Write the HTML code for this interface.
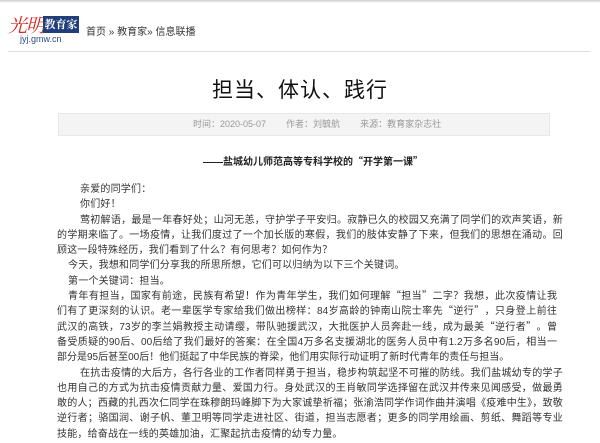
<!DOCTYPE html>
<html><head><meta charset="utf-8"><style>
*{margin:0;padding:0;box-sizing:border-box}
body{width:600px;height:443px;overflow:hidden;background:#fff;font-family:"Liberation Sans","Noto Sans CJK SC",sans-serif;color:#333;position:relative}
.top{position:absolute;left:0;top:0;width:600px;height:3px;background:linear-gradient(#ccc,#fff)}
.logo1{position:absolute;left:8px;top:14px;font-family:"Noto Serif CJK SC",serif;font-style:italic;color:#d9261c;font-size:19px;font-weight:normal;letter-spacing:-1px;line-height:22px}
.logo2{position:absolute;left:43px;top:16px;width:36px;height:17px;background:#1f3e7a;color:#fff;font-family:"Noto Serif CJK SC",serif;font-size:11px;font-weight:bold;line-height:17px;text-align:center}
.dom{position:absolute;left:20px;top:34px;font-size:9px;color:#2a4a8a}
.bc{position:absolute;left:86px;top:23px;font-size:10px;color:#333}
.hr{position:absolute;left:8px;top:51px;width:582px;height:1px;background:#ddd}
h1{position:absolute;left:0;width:600px;top:74px;text-align:center;font-size:21px;font-weight:normal;color:#111;letter-spacing:1px}
.meta{position:absolute;left:58px;top:113px;width:492px;height:23px;background:#f4f4f4;border:1px solid #e8e8e8;font-size:9px;color:#999;line-height:21px;padding-left:134px}
.meta span{margin-right:20px}
.sub{position:absolute;left:203px;top:153px;font-size:10px;font-weight:bold;color:#222}
.body{position:absolute;left:57px;top:182px;width:506px;font-size:10px;line-height:15.3px;color:#333;text-align:justify;letter-spacing:0.2px}
.body p{text-indent:23px}
.body p.m{text-indent:0;letter-spacing:0}
.m span{display:block;white-space:nowrap;text-align:justify;text-align-last:justify;width:500px;height:15.3px;line-height:15.3px}
.m span.f{padding-left:11px}
.m span.l{text-align-last:left}
q{quotes:none;font-family:"Noto Sans CJK SC",sans-serif;line-height:10px;display:inline-block;height:10px}
</style></head><body>
<div class="top"></div>
<div class="logo1">光明</div>
<div class="logo2">教育家</div>
<div class="dom">jyj.gmw.cn</div>
<div class="bc">首页 » 教育家» 信息联播</div>
<div class="hr"></div>
<h1>担当、体认、践行</h1>
<div class="meta"><span>时间：2020-05-07</span><span>作者：刘毓航</span><span>来源：教育家杂志社</span></div>
<div class="sub">——盐城幼儿师范高等专科学校的<q>“</q>开学第一课<q>”</q></div>
<div class="body">
<p>亲爱的同学们：</p>
<p>你们好！</p>
<p>莺初解语，最是一年春好处；山河无恙，守护学子平安归。寂静已久的校园又充满了同学们的欢声笑语，新的学期来临了。一场疫情，让我们度过了一个加长版的寒假，我们的肢体安静了下来，但我们的思想在涌动。回顾这一段特殊经历，我们看到了什么？有何思考？如何作为？</p>
<p style="text-indent:11px">今天，我想和同学们分享我的所思所想，它们可以归纳为以下三个关键词。</p>
<p style="text-indent:11px">第一个关键词：担当。</p>
<p class="m"><span class="f">青年有担当，国家有前途，民族有希望！作为青年学生，我们如何理解<q>“</q>担当<q>”</q>二字？我想，此次疫情让我</span><span>们有了更深刻的认识。老一辈医学专家给我们做出榜样：84岁高龄的钟南山院士率先<q>“</q>逆行<q>”</q>，只身登上前往</span><span>武汉的高铁，73岁的李兰娟教授主动请缨，带队驰援武汉，大批医护人员奔赴一线，成为最美<q>“</q>逆行者<q>”</q>。曾</span><span>备受质疑的90后、00后给了我们最好的答案：在全国4万多名支援湖北的医务人员中有1.2万多名90后，相当一</span><span class="l">部分是95后甚至00后！他们挺起了中华民族的脊梁，他们用实际行动证明了新时代青年的责任与担当。</span></p>
<p>在抗击疫情的大后方，各行各业的工作者同样勇于担当，稳步构筑起坚不可摧的防线。我们盐城幼专的学子也用自己的方式为抗击疫情贡献力量、爱国力行。身处武汉的王肖敏同学选择留在武汉并传来见闻感受，做最勇敢的人；西藏的扎西次仁同学在珠穆朗玛峰脚下为大家诚挚祈福；张渝浩同学作词作曲并演唱《疫难中生》，致敬逆行者；骆国润、谢子帆、董卫明等同学走进社区、街道，担当志愿者；更多的同学用绘画、剪纸、舞蹈等专业技能，给奋战在一线的英雄加油，汇聚起抗击疫情的幼专力量。</p>
</div>
</body></html>
